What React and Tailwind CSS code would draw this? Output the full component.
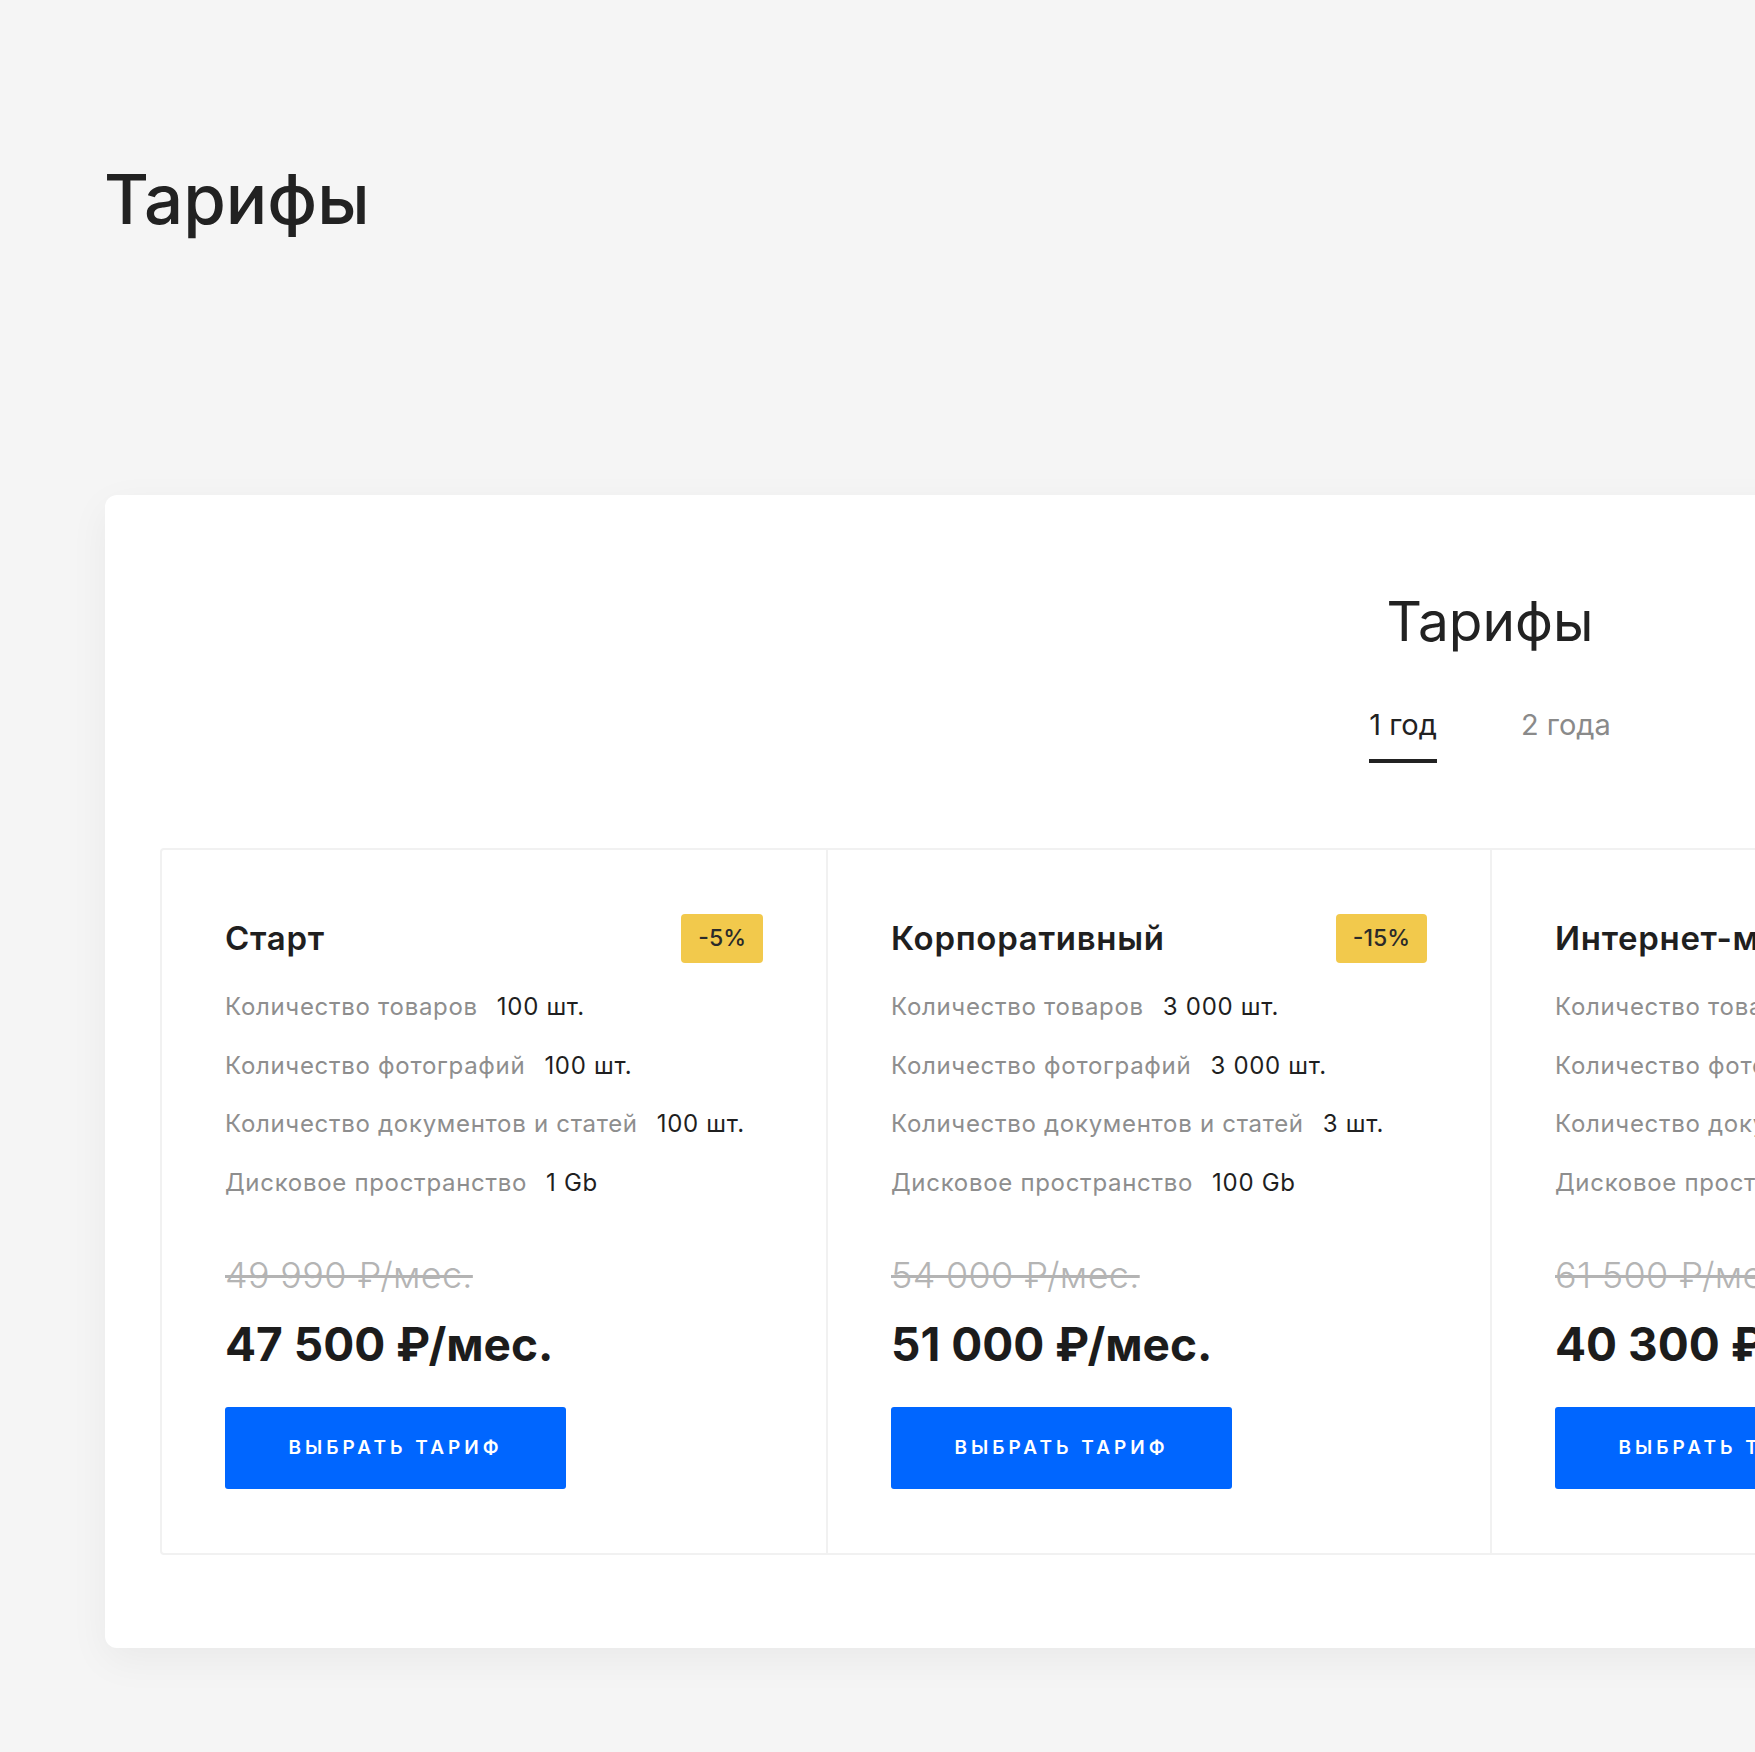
import React, { useState } from 'react'

const plans = [
  {
    name: 'Старт',
    discount: '-5%',
    goods: '100 шт.',
    photos: '100 шт.',
    docs: '100 шт.',
    disk: '1 Gb',
    oldPrice: '49 990 ₽/мес.',
    price: '47 500 ₽/мес.',
  },
  {
    name: 'Корпоративный',
    discount: '-15%',
    goods: '3 000 шт.',
    photos: '3 000 шт.',
    docs: '3 шт.',
    disk: '100 Gb',
    oldPrice: '54 000 ₽/мес.',
    price: '51 000 ₽/мес.',
  },
  {
    name: 'Интернет-магазин',
    discount: '-35%',
    goods: '10 000 шт.',
    photos: '10 000 шт.',
    docs: '50 шт.',
    disk: '500 Gb',
    oldPrice: '61 500 ₽/мес.',
    price: '40 300 ₽/мес.',
  },
  {
    name: 'Премиум',
    discount: '-20%',
    goods: '50 000 шт.',
    photos: '50 000 шт.',
    docs: '500 шт.',
    disk: '1 Tb',
    oldPrice: '90 000 ₽/мес.',
    price: '72 000 ₽/мес.',
  },
]

function Feature({ label, value }) {
  return (
    <div className="flex h-[58.5px] items-center gap-[19px] text-[24px] tracking-[0.7px] whitespace-nowrap">
      <span className="text-[#8e8e8e]">{label}</span>
      <span className="text-[#1f1f1f]">{value}</span>
    </div>
  )
}

function PlanCard({ plan, first }) {
  return (
    <div className={`w-[664px] shrink-0 px-[63px] pt-[64px] pb-[64px] ${first ? '' : 'border-l-2 border-[#f1f1f1]'}`}>
      <div className="flex h-[49px] items-center justify-between">
        <h3 className="text-[33px] font-semibold tracking-[0.7px] text-[#1f1f1f] whitespace-nowrap">{plan.name}</h3>
        <span className="flex h-[49px] items-center rounded-[4px] bg-[#f2c94c] px-[17px] text-[23px] font-medium text-[#2a2a2a]">
          {plan.discount}
        </span>
      </div>
      <div className="mt-[15px]">
        <Feature label="Количество товаров" value={plan.goods} />
        <Feature label="Количество фотографий" value={plan.photos} />
        <Feature label="Количество документов и статей" value={plan.docs} />
        <Feature label="Дисковое пространство" value={plan.disk} />
      </div>
      <div className="mt-[41px] text-[36px] leading-[44px] font-light tracking-[0.3px] text-[#b4b4b4] line-through whitespace-nowrap">{plan.oldPrice}</div>
      <div className="mt-[19px] text-[46px] leading-[56px] font-bold text-[#1c1c1c] whitespace-nowrap">{plan.price}</div>
      <button className="mt-[35px] flex h-[82px] w-[341px] items-center justify-center rounded-[3px] bg-[#0066ff] text-[19px] font-semibold tracking-[4px] text-white">
        ВЫБРАТЬ ТАРИФ
      </button>
    </div>
  )
}

export default function App() {
  const [period, setPeriod] = useState('1')

  return (
    <div
      className="h-[1752px] w-[1755px] overflow-hidden bg-[#f5f5f5]"
      style={{ fontFamily: 'Inter, "Open Sans", sans-serif' }}
    >
      <h1 className="pl-[104px] pt-[155px] text-[69px] leading-[88px] font-medium text-[#222]">Тарифы</h1>

      <div className="ml-[105px] mt-[252px] w-[2770px] rounded-[12px] bg-white px-[55px] pt-[95px] pb-[93px] shadow-[0_12px_40px_rgba(0,0,0,0.05)]">
        <h2 className="text-center text-[55px] leading-[62px] text-[#222]">Тарифы</h2>

        <div className="mt-[56px] flex justify-center gap-[84px]">
          <button
            onClick={() => setPeriod('1')}
            className={`flex flex-col items-stretch text-[29px] leading-[34px] ${period === '1' ? 'text-[#222]' : 'text-[#8a8a8a]'}`}
          >
            <span>1 год</span>
            <span className={`mt-[17px] h-[4px] ${period === '1' ? 'bg-[#222]' : 'bg-transparent'}`} />
          </button>
          <button
            onClick={() => setPeriod('2')}
            className={`flex flex-col items-stretch text-[29px] leading-[34px] ${period === '2' ? 'text-[#222]' : 'text-[#8a8a8a]'}`}
          >
            <span>2 года</span>
            <span className={`mt-[17px] h-[4px] ${period === '2' ? 'bg-[#222]' : 'bg-transparent'}`} />
          </button>
        </div>

        <div className="mt-[85px] flex rounded-[4px] border-2 border-[#f1f1f1]">
          {plans.map((p, i) => (
            <PlanCard key={p.name} plan={p} first={i === 0} />
          ))}
        </div>
      </div>
    </div>
  )
}
